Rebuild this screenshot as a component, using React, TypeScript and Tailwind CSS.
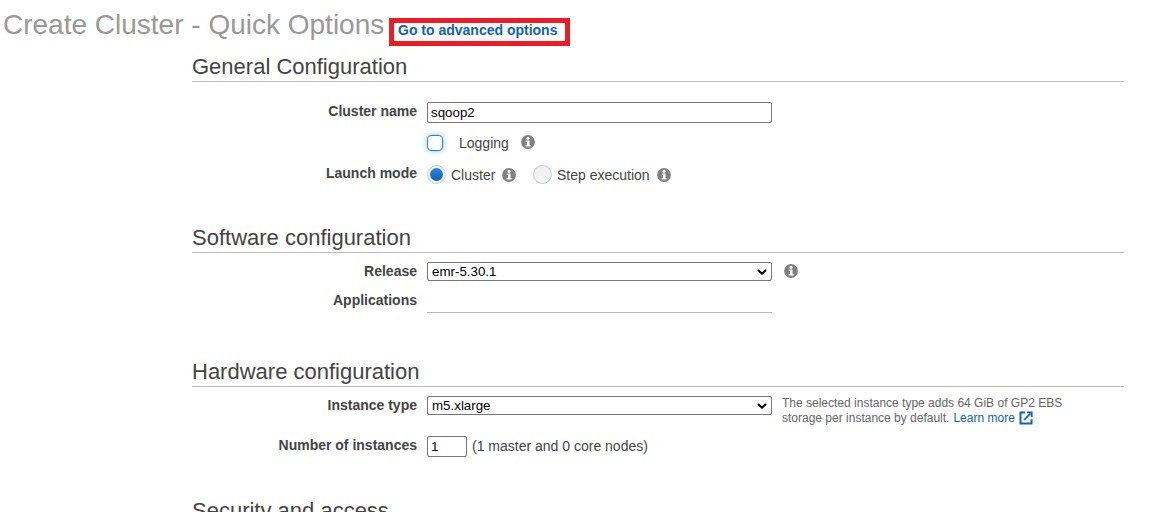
import type { ReactNode } from 'react';

function InfoIcon() {
  return (
    <svg className="block size-[14px] shrink-0" viewBox="0 0 14 14" aria-hidden="true">
      <circle cx="7" cy="7" r="6.9" fill="#808080" />
      <circle cx="7" cy="3.2" r="1.5" fill="#fff" />
      <path d="M4.7 5.4h3.8v4.6h1.1v1.6H4.6V10h1.3V7H4.7z" fill="#fff" />
    </svg>
  );
}

function ExternalIcon() {
  return (
    <svg className="block size-[14px] shrink-0" viewBox="0 0 14 14" fill="none" stroke="#0f62b8" aria-hidden="true">
      <path d="M6 1.5H1.5v11h11V8.2" strokeWidth="2" />
      <path d="M5 9 11.4 2.6" strokeWidth="1.7" />
      <path d="M8 1.3h4.7V6" strokeWidth="1.8" />
    </svg>
  );
}

function SectionHeading({ children }: { children: ReactNode }) {
  return (
    <h2 className="h-[27px] shrink-0 border-b border-[#bbb] pt-px text-[22px] leading-[22px] text-[#444]">
      {children}
    </h2>
  );
}

function Row({ label, children, className }: { label?: string; children?: ReactNode; className: string }) {
  return (
    <div className={`flex shrink-0 items-start ${className}`}>
      <div className="w-[225px] shrink-0 pt-px text-right font-bold">{label}</div>
      <div className="ml-[10px] flex items-start">{children}</div>
    </div>
  );
}

function Select({ value }: { value: string }) {
  return (
    <div className="grid h-[19px] w-[345px] items-center">
      <select
        defaultValue={value}
        className="col-start-1 row-start-1 h-[19px] w-full appearance-none rounded-[2px] border border-[#767676] bg-white pl-1 text-[13.333px] leading-[17px] text-black"
      >
        <option>{value}</option>
      </select>
      <svg
        className="pointer-events-none col-start-1 row-start-1 mr-[5px] h-[6px] w-[10px] justify-self-end"
        viewBox="0 0 10 6"
        fill="none"
        aria-hidden="true"
      >
        <path d="M1 1 5 4.7 9 1" stroke="#000" strokeWidth="2" />
      </svg>
    </div>
  );
}

export default function App() {
  return (
    <main className="flex h-[512px] w-[1164px] flex-col overflow-hidden bg-white font-['Liberation_Sans',Arial,sans-serif] text-[14px] leading-[16px] text-[#444]">
      <header className="flex h-[55px] shrink-0 items-start pl-[3px]">
        <h1 className="mt-[9px] w-[386px] whitespace-nowrap text-[28px] leading-[32px] text-[#999]">
          Create Cluster - Quick Options
        </h1>
        <a
          href="#advanced"
          className="mt-[18px] h-[28px] w-[181px] whitespace-nowrap border-[5px] border-[#ed1c24] pl-[4px] font-bold leading-[14px] text-[#0f62b8]"
        >
          Go to advanced options
        </a>
      </header>

      <div className="ml-[192px] flex w-[932px] flex-col">
        <section className="flex h-[171px] shrink-0 flex-col">
          <SectionHeading>General Configuration</SectionHeading>
          <Row label="Cluster name" className="mt-[20px] h-[32px]">
            <input
              defaultValue="sqoop2"
              className="h-[21px] w-[345px] rounded-[2px] border border-[#767676] bg-white px-[3px] text-[13.333px] text-black"
            />
          </Row>
          <Row className="h-[30px]">
            <span className="mt-[1px] size-[16px] rounded-[4px] border border-[#2a80dc] bg-white shadow-[0_0_6px_#8cc4ff]" />
            <span className="ml-[16px] mt-[1px] w-[62px]">Logging</span>
            <span className="mt-[1px]">
              <InfoIcon />
            </span>
          </Row>
          <Row label="Launch mode" className="h-[24px]">
            <span className="mt-px flex size-[19px] items-center justify-center rounded-full border border-[#ccc] bg-[#f5f5f5]">
              <span className="size-[13px] rounded-full bg-gradient-to-b from-[#2a84dd] to-[#0f62b8]" />
            </span>
            <span className="ml-[5px] mt-[3px] w-[51px]">Cluster</span>
            <span className="mt-[4px]">
              <InfoIcon />
            </span>
            <span className="ml-[17px] mt-px size-[19px] rounded-full border border-[#ccc] bg-gradient-to-b from-[#eee] to-[#f5f5f5]" />
            <span className="ml-[5px] mt-[3px] w-[100px]">Step execution</span>
            <span className="mt-[4px]">
              <InfoIcon />
            </span>
          </Row>
        </section>

        <section className="flex h-[134px] shrink-0 flex-col">
          <SectionHeading>Software configuration</SectionHeading>
          <Row label="Release" className="mt-[9px] h-[29px]">
            <Select value="emr-5.30.1" />
            <span className="ml-[12px] mt-[2px]">
              <InfoIcon />
            </span>
          </Row>
          <Row label="Applications" className="h-[22px]">
            <div className="h-[22px] w-[345px] border-b border-[#bbb]" />
          </Row>
        </section>

        <section className="flex h-[139px] shrink-0 flex-col">
          <SectionHeading>Hardware configuration</SectionHeading>
          <Row label="Instance type" className="mt-[9px] h-[40px]">
            <Select value="m5.xlarge" />
            <div className="ml-[10px] whitespace-nowrap text-[12px] leading-[15px] text-[#666]">
              <p>The selected instance type adds 64 GiB of GP2 EBS</p>
              <p className="flex">
                storage per instance by default.
                <a href="#storage" className="ml-[4px] flex gap-[4px] text-[#0f62b8]">
                  Learn more
                  <ExternalIcon />
                </a>
              </p>
            </div>
          </Row>
          <Row label="Number of instances" className="h-[24px]">
            <input
              defaultValue="1"
              className="h-[21px] w-[40px] rounded-[2px] border border-[#767676] bg-white px-[3px] text-[13.333px] text-black"
            />
            <span className="ml-[5px] mt-[2px]">(1 master and 0 core nodes)</span>
          </Row>
        </section>

        <section>
          <SectionHeading>Security and access</SectionHeading>
        </section>
      </div>
    </main>
  );
}
